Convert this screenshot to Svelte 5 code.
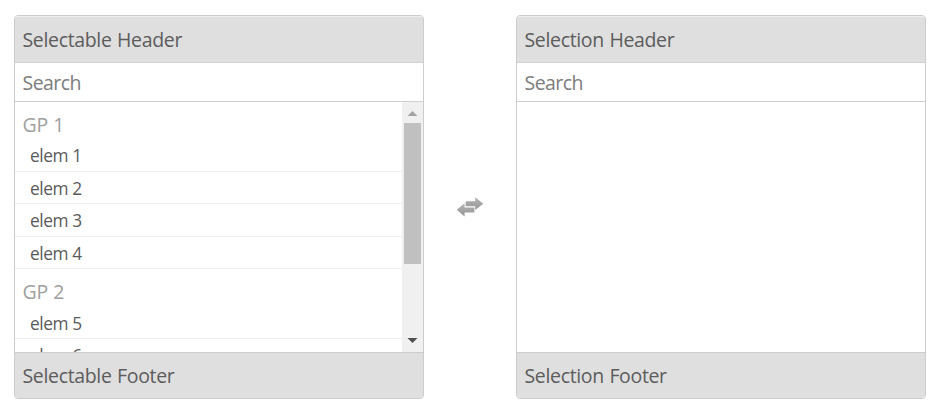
<script>
  const groups = [
    { label: 'GP 1', items: ['elem 1', 'elem 2', 'elem 3', 'elem 4'] },
    { label: 'GP 2', items: ['elem 5', 'elem 6'] }
  ];
  const lists = [
    { name: 'Selectable', groups },
    { name: 'Selection', groups: [] }
  ];
</script>

<div class="multiselect">
  {#each lists as list, i}
    {#if i === 1}
      <div class="switch">
        <svg width="28" height="20" viewBox="0 0 28 20" aria-hidden="true">
          <defs>
            <linearGradient id="metal" x1="0" y1="0" x2="0" y2="1">
              <stop offset="0" stop-color="#b4b4b4" />
              <stop offset="1" stop-color="#969696" />
            </linearGradient>
          </defs>
          <path d="M9.7 4.3H19.2V.2L27.3 6.7L19.2 13V9.2H9.7Z" fill="url(#metal)" />
          <path d="M.7 12.8L8.6 6.2V10.6H18.4V15.4H8.6V19.4Z" fill="url(#metal)" />
        </svg>
      </div>
    {/if}
    <section class="panel">
      <header class="bar">{list.name} Header</header>
      <input type="text" placeholder="Search" aria-label="Search" />
      <div class="body">
        <div class="list">
          {#each list.groups as group}
            <div class="group">
              <div class="label">{group.label}</div>
              {#each group.items as item}
                <div class="item">{item}</div>
              {/each}
            </div>
          {/each}
        </div>
        {#if list.groups.length}
          <div class="scroll">
            <svg width="21" height="21" viewBox="0 0 21 21"><path d="M5.5 14L10.5 9L15.5 14Z" fill="#a3a3a3" /></svg>
            <div class="thumb"></div>
            <svg class="down" width="21" height="21" viewBox="0 0 21 21"><path d="M5.5 7L10.5 12L15.5 7Z" fill="#505050" /></svg>
          </div>
        {/if}
      </div>
      <footer class="bar">{list.name} Footer</footer>
    </section>
  {/each}
</div>

<style>
  :global(body) {
    background: #fff;
  }
  .multiselect {
    display: flex;
    box-sizing: border-box;
    width: 940px;
    height: 408px;
    padding: 15px 14px 9px;
    overflow: hidden;
    font-family: 'Open Sans', 'Noto Sans', sans-serif;
    font-size: 19.5px;
    color: #5c5c5c;
  }
  .panel {
    display: flex;
    flex-direction: column;
    box-sizing: border-box;
    width: 410px;
    height: 384px;
    border: 1px solid #ccc;
    border-radius: 4px;
    overflow: hidden;
  }
  .bar {
    flex: none;
    box-sizing: border-box;
    padding-left: 7.5px;
    background: #dfdfdf;
    white-space: nowrap;
    letter-spacing: -0.34px;
    word-spacing: 0.8px;
  }
  header {
    height: 46px;
    line-height: 46px;
    border-top: 1px solid #eee;
  }
  footer {
    height: 46px;
    line-height: 46px;
    border-top: 1px solid #ccc;
  }
  input {
    flex: none;
    box-sizing: border-box;
    width: 100%;
    height: 40px;
    margin: 0;
    padding: 1px 7.5px 0;
    border: 0;
    border-top: 1px solid #d2d2d2;
    border-bottom: 1px solid #d0d0d0;
    outline: 0;
    background: #fff;
    font: inherit;
    letter-spacing: -0.55px;
    color: #555;
  }
  input::placeholder {
    color: #7c7c7c;
    opacity: 1;
  }
  .body {
    display: flex;
    flex: 1;
    min-height: 0;
    overflow: hidden;
  }
  .list {
    flex: 1;
  }
  .group + .group {
    padding-top: 0.5px;
  }
  .label {
    height: 37.4px;
    padding-left: 7.5px;
    line-height: 46px;
    letter-spacing: -0.3px;
    word-spacing: 0.8px;
    color: #a0a0a0;
  }
  .item {
    box-sizing: border-box;
    height: 32.4px;
    padding-left: 15px;
    border-bottom: 1px solid #eee;
    font-size: 17.3px;
    line-height: 33.1px;
    letter-spacing: -0.4px;
    color: #5a5a5a;
  }
  .scroll {
    display: flex;
    flex-direction: column;
    align-items: center;
    width: 21px;
    background: #f0f0f0;
  }
  .thumb {
    width: 17px;
    height: 141px;
    background: #c0c0c0;
  }
  .down {
    margin-top: auto;
  }
  .switch {
    display: flex;
    width: 92px;
    align-items: center;
    justify-content: center;
  }
</style>
